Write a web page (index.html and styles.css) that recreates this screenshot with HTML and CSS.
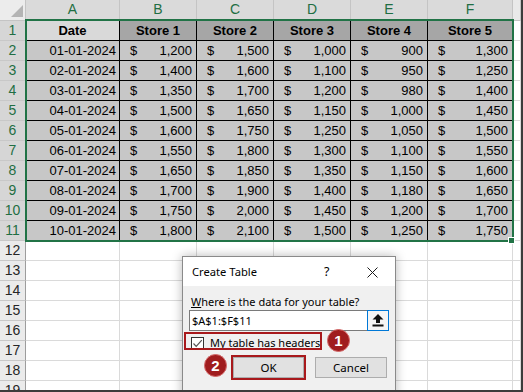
FILE: index.html
```html
<!DOCTYPE html>
<html>
<head>
<meta charset="utf-8">
<link rel="stylesheet" href="styles.css">
</head>
<body>
<div class="frame">
  <div class="sheet">
    <div class="corner"><svg width="26" height="21" viewBox="0 0 26 21"><polygon points="11,17 23,17 23,5" fill="#b4b4b4"/></svg></div>
    <div class="ch sel">A</div><div class="ch sel">B</div><div class="ch sel">C</div><div class="ch sel">D</div><div class="ch sel">E</div><div class="ch sel">F</div><div class="ch"></div>

    <div class="rh sel">1</div><div class="c hd first">Date</div><div class="c hd">Store 1</div><div class="c hd">Store 2</div><div class="c hd">Store 3</div><div class="c hd">Store 4</div><div class="c hd">Store 5</div><div class="c"></div>

    <div class="rh sel">2</div><div class="c d dt">01-01-2024</div><div class="c d acc"><span>$</span><span>1,200</span></div><div class="c d acc"><span>$</span><span>1,500</span></div><div class="c d acc"><span>$</span><span>1,000</span></div><div class="c d acc"><span>$</span><span>900</span></div><div class="c d acc"><span>$</span><span>1,300</span></div><div class="c"></div>

    <div class="rh sel">3</div><div class="c d dt">02-01-2024</div><div class="c d acc"><span>$</span><span>1,400</span></div><div class="c d acc"><span>$</span><span>1,600</span></div><div class="c d acc"><span>$</span><span>1,100</span></div><div class="c d acc"><span>$</span><span>950</span></div><div class="c d acc"><span>$</span><span>1,250</span></div><div class="c"></div>

    <div class="rh sel">4</div><div class="c d dt">03-01-2024</div><div class="c d acc"><span>$</span><span>1,350</span></div><div class="c d acc"><span>$</span><span>1,700</span></div><div class="c d acc"><span>$</span><span>1,200</span></div><div class="c d acc"><span>$</span><span>980</span></div><div class="c d acc"><span>$</span><span>1,400</span></div><div class="c"></div>

    <div class="rh sel">5</div><div class="c d dt">04-01-2024</div><div class="c d acc"><span>$</span><span>1,500</span></div><div class="c d acc"><span>$</span><span>1,650</span></div><div class="c d acc"><span>$</span><span>1,150</span></div><div class="c d acc"><span>$</span><span>1,000</span></div><div class="c d acc"><span>$</span><span>1,450</span></div><div class="c"></div>

    <div class="rh sel">6</div><div class="c d dt">05-01-2024</div><div class="c d acc"><span>$</span><span>1,600</span></div><div class="c d acc"><span>$</span><span>1,750</span></div><div class="c d acc"><span>$</span><span>1,250</span></div><div class="c d acc"><span>$</span><span>1,050</span></div><div class="c d acc"><span>$</span><span>1,500</span></div><div class="c"></div>

    <div class="rh sel">7</div><div class="c d dt">06-01-2024</div><div class="c d acc"><span>$</span><span>1,550</span></div><div class="c d acc"><span>$</span><span>1,800</span></div><div class="c d acc"><span>$</span><span>1,300</span></div><div class="c d acc"><span>$</span><span>1,100</span></div><div class="c d acc"><span>$</span><span>1,550</span></div><div class="c"></div>

    <div class="rh sel">8</div><div class="c d dt">07-01-2024</div><div class="c d acc"><span>$</span><span>1,650</span></div><div class="c d acc"><span>$</span><span>1,850</span></div><div class="c d acc"><span>$</span><span>1,350</span></div><div class="c d acc"><span>$</span><span>1,150</span></div><div class="c d acc"><span>$</span><span>1,600</span></div><div class="c"></div>

    <div class="rh sel">9</div><div class="c d dt">08-01-2024</div><div class="c d acc"><span>$</span><span>1,700</span></div><div class="c d acc"><span>$</span><span>1,900</span></div><div class="c d acc"><span>$</span><span>1,400</span></div><div class="c d acc"><span>$</span><span>1,180</span></div><div class="c d acc"><span>$</span><span>1,650</span></div><div class="c"></div>

    <div class="rh sel">10</div><div class="c d dt">09-01-2024</div><div class="c d acc"><span>$</span><span>1,750</span></div><div class="c d acc"><span>$</span><span>2,000</span></div><div class="c d acc"><span>$</span><span>1,450</span></div><div class="c d acc"><span>$</span><span>1,200</span></div><div class="c d acc"><span>$</span><span>1,700</span></div><div class="c"></div>

    <div class="rh sel">11</div><div class="c d dt">10-01-2024</div><div class="c d acc"><span>$</span><span>1,800</span></div><div class="c d acc"><span>$</span><span>2,100</span></div><div class="c d acc"><span>$</span><span>1,500</span></div><div class="c d acc"><span>$</span><span>1,250</span></div><div class="c d acc"><span>$</span><span>1,750</span></div><div class="c"></div>

    <div class="rh">12</div><div class="c"></div><div class="c"></div><div class="c"></div><div class="c"></div><div class="c"></div><div class="c"></div><div class="c"></div>
    <div class="rh">13</div><div class="c"></div><div class="c"></div><div class="c"></div><div class="c"></div><div class="c"></div><div class="c"></div><div class="c"></div>
    <div class="rh">14</div><div class="c"></div><div class="c"></div><div class="c"></div><div class="c"></div><div class="c"></div><div class="c"></div><div class="c"></div>
    <div class="rh">15</div><div class="c"></div><div class="c"></div><div class="c"></div><div class="c"></div><div class="c"></div><div class="c"></div><div class="c"></div>
    <div class="rh">16</div><div class="c"></div><div class="c"></div><div class="c"></div><div class="c"></div><div class="c"></div><div class="c"></div><div class="c"></div>
    <div class="rh">17</div><div class="c"></div><div class="c"></div><div class="c"></div><div class="c"></div><div class="c"></div><div class="c"></div><div class="c"></div>
    <div class="rh">18</div><div class="c"></div><div class="c"></div><div class="c"></div><div class="c"></div><div class="c"></div><div class="c"></div><div class="c"></div>
    <div class="rh">19</div><div class="c"></div><div class="c"></div><div class="c"></div><div class="c"></div><div class="c"></div><div class="c"></div><div class="c"></div>
  </div>

  <div class="selection"></div>
  <div class="handle"></div>

  <div class="dialog">
    <div class="titlebar">
      <span class="title">Create Table</span>
      <span class="help">?</span>
      <svg class="close" width="11" height="11" viewBox="0 0 11 11"><path d="M0.5 0.5 L10.5 10.5 M10.5 0.5 L0.5 10.5" stroke="#1a1a1a" stroke-width="1"/></svg>
    </div>
    <div class="dbody">
      <div class="label"><u>W</u>here is the data for your table?</div>
      <div class="range">
        <span class="rtext">$A$1:$F$11</span>
        <span class="rbtn"><svg width="12" height="13" viewBox="0 0 12 13"><polygon points="6,0 11.5,5.5 8,5.5 8,9 4,9 4,5.5 0.5,5.5" fill="#111"/><rect x="0.5" y="10.5" width="11" height="2" fill="#111"/></svg></span>
      </div>
      <div class="chkrow">
        <span class="chk"><svg width="11" height="11" viewBox="0 0 11 11"><path d="M1.5 5.5 L4.2 8.3 L9.8 2.2" fill="none" stroke="#555" stroke-width="1.2"/></svg></span>
        <span class="chklabel"><u>M</u>y table has headers</span>
      </div>
      <div class="btns">
        <button class="btn ok">OK</button>
        <button class="btn">Cancel</button>
      </div>
    </div>
  </div>

  <div class="mark-box"></div>
  <div class="badge b1">1</div>
  <div class="badge b2">2</div>
</div>
</body>
</html>
```

FILE: styles.css
```css
* { box-sizing: border-box; }
html, body { margin: 0; padding: 0; background: #ffffff; }

.frame {
  position: relative;
  width: 523px;
  height: 392px;
  overflow: hidden;
  background: #ffffff;
  border-right: 2px solid #3c3c3c;
  border-bottom: 2px solid #3c3c3c;
  font-family: "Liberation Sans", Arial, sans-serif;
  font-size: 13px;
  color: #000;
}

.sheet {
  display: grid;
  grid-template-columns: 26px 94px 77px 77px 77px 77px 85px 1fr;
  grid-template-rows: 21px;
  grid-auto-rows: 20px;
}

.corner {
  background: #ececec;
  border-right: 1px solid #c4c4c4;
  border-bottom: 1px solid #c4c4c4;
}
.corner svg { display: block; }

.ch {
  background: #e9e9e9;
  border-right: 1px solid #c4c4c4;
  border-bottom: 1px solid #c4c4c4;
  text-align: center;
  line-height: 19px;
  font-size: 14px;
  color: #333;
}
.ch.sel {
  background: #dadada;
  color: #1f6e43;
  border-bottom: 2px solid #217346;
}

.rh {
  background: #ebebeb;
  border-right: 1px solid #9d9d9d;
  border-bottom: 1px solid #c8c8c8;
  text-align: center;
  line-height: 19px;
  font-size: 14px;
  color: #262626;
}
.rh.sel {
  background: #d6d6d6;
  color: #1f6e43;
  border-right-color: #217346;
}

.c {
  border-right: 1px solid #dadada;
  border-bottom: 1px solid #dadada;
  line-height: 20px;
  white-space: nowrap;
  overflow: hidden;
}
.hd {
  background: #a6a6a6;
  border-right: 1px solid #000;
  border-bottom: 1px solid #000;
  font-weight: bold;
  text-align: center;
}
.hd.first { background: #d9d9d9; }
.d {
  background: #c7c7c7;
  border-right: 1px solid #000;
  border-bottom: 1px solid #000;
}
.dt { text-align: right; padding-right: 3px; }
.acc {
  display: flex;
  justify-content: space-between;
  padding-left: 10px;
  padding-right: 4px;
}

.selection {
  position: absolute;
  left: 25px;
  top: 19px;
  width: 489px;
  height: 223px;
  border: 2px solid #217346;
  pointer-events: none;
}
.handle {
  position: absolute;
  left: 508px;
  top: 237px;
  width: 7px;
  height: 7px;
  background: #217346;
  border: 1px solid #ffffff;
}

.dialog {
  position: absolute;
  left: 182px;
  top: 256px;
  width: 214px;
  height: 150px;
  border: 1px solid #8a8a8a;
  background: #f0f0f0;
  box-shadow: 0 0 10px rgba(0, 0, 0, 0.28);
  font-family: "Noto Sans", "Open Sans", sans-serif;
  font-size: 11px;
  color: #000;
  display: flex;
  flex-direction: column;
}
.titlebar {
  height: 29px;
  background: #ffffff;
  display: flex;
  align-items: center;
  padding-left: 9px;
  position: relative;
}
.title { font-size: 11.2px; }
.help {
  position: absolute;
  left: 141px;
  top: 6px;
  font-size: 12.5px;
}
.close {
  position: absolute;
  left: 184px;
  top: 10px;
}
.dbody {
  padding: 7px 6px 0 6px;
  display: flex;
  flex-direction: column;
}
.label {
  height: 17px;
  line-height: 17px;
  padding-left: 2px;
}
.range {
  margin-top: 0px;
  height: 21px;
  width: 200px;
  display: flex;
  border: 1px solid #7a7a7a;
  background: #ffffff;
}
.rtext {
  flex: 1;
  line-height: 19px;
  padding-left: 2px;
}
.rbtn {
  width: 22px;
  margin: -1px -1px -1px 0;
  border: 1px solid #0078d7;
  background: #f5f5f5;
  display: flex;
  align-items: center;
  justify-content: center;
}
.rbtn svg { display: block; }
.chkrow {
  margin-top: 5px;
  height: 14px;
  display: flex;
  align-items: center;
  padding-left: 2px;
}
.chk {
  width: 13px;
  height: 13px;
  border: 1px solid #333;
  background: #ffffff;
  display: flex;
  align-items: center;
  justify-content: center;
}
.chk svg { display: block; }
.chklabel { margin-left: 6px; line-height: 14px; }
.btns {
  margin-top: 7px;
  display: flex;
  padding-left: 44px;
  gap: 11px;
}
.btn {
  width: 72px;
  height: 21px;
  background: #e1e1e1;
  border: 1px solid #adadad;
  font-family: "Noto Sans", "Open Sans", sans-serif;
  font-size: 11.5px;
  color: #000;
  padding: 0;
  line-height: 19px;
}
.btn.ok {
  width: 71px;
  outline: 2px solid #a8191c;
  outline-offset: 0;
}

.mark-box {
  position: absolute;
  left: 184px;
  top: 332px;
  width: 138px;
  height: 18px;
  border: 2px solid #a8191c;
}
.badge {
  position: absolute;
  width: 23px;
  height: 23px;
  border-radius: 50%;
  background: #a01c1e;
  border: 1px solid #d46a6a;
  color: #ffffff;
  font-family: "Liberation Sans", Arial, sans-serif;
  font-weight: bold;
  font-size: 15px;
  line-height: 21px;
  text-align: center;
}
.b1 { left: 327px; top: 329px; }
.b2 { left: 204px; top: 354px; }
```
